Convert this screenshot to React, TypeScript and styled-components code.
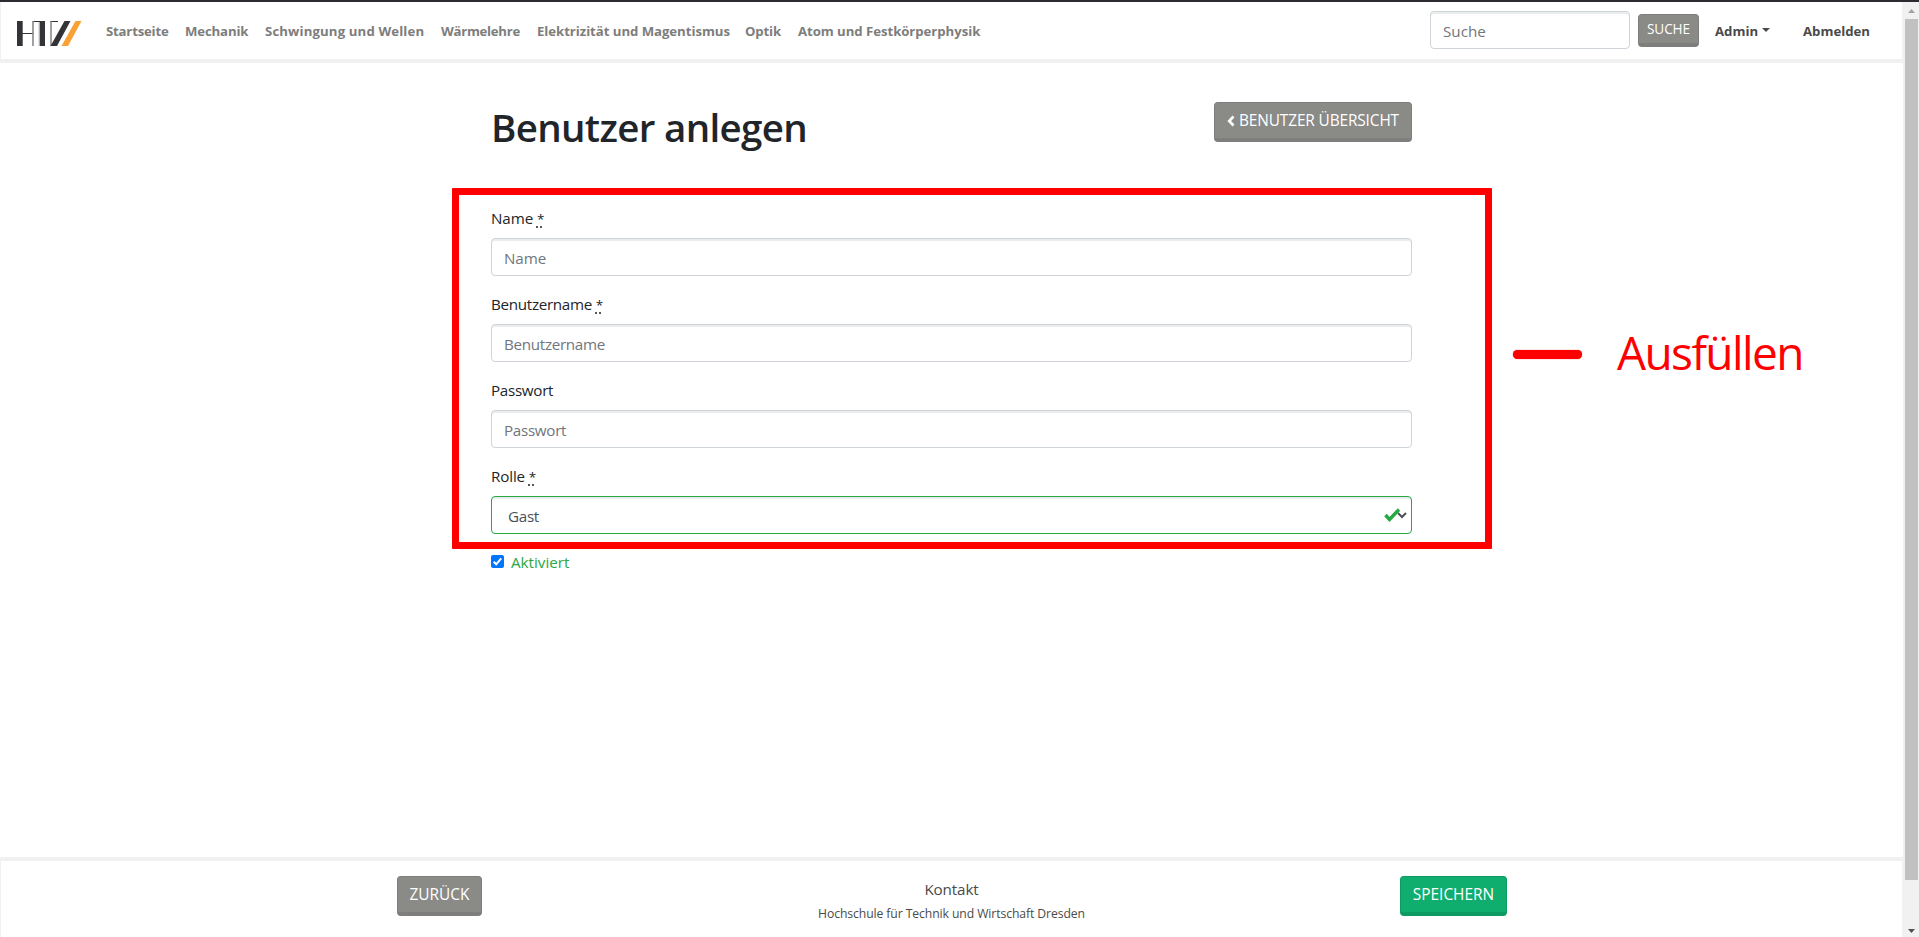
import React from 'react';
import styled, { createGlobalStyle } from 'styled-components';

const GlobalStyle = createGlobalStyle`
  * { box-sizing: border-box; }
  body {
    margin: 0;
    background: #fff;
    color: #212529;
    font: 400 15.2px/24px "Open Sans", "Noto Sans", sans-serif;
    overflow: hidden;
  }
`;

const Screen = styled.div`
  position: relative;
  display: flex;
  width: 1919px;
  height: 937px;
  border-top: 2px solid #2c2b30;
`;

const Page = styled.div`
  display: flex;
  flex-direction: column;
  width: 1903px;
`;

const Navbar = styled.header`
  display: flex;
  align-items: center;
  height: 61px;
  padding: 0 32px 1px 16px;
  border: 1px solid #f1f1f1;
  border-top: 0;
  border-bottom-width: 4px;
`;

const Logo = styled.svg`
  display: block;
  align-self: flex-start;
  width: 66px;
  height: 26px;
  margin: 19px 23px 0 0;
`;

const NavList = styled.nav`
  display: flex;
  flex: 1;
`;

const NavLink = styled.a<{ $width: number; $spacing: number; $dark?: boolean }>`
  flex: none;
  width: ${(p) => p.$width}px;
  padding-top: 2px;
  color: ${(p) => (p.$dark ? '#4a4a49' : '#7d7d7c')};
  font-size: 13.2px;
  font-weight: 700;
  letter-spacing: ${(p) => p.$spacing}px;
  white-space: nowrap;
`;

const Caret = styled.span`
  display: inline-block;
  margin-left: 4px;
  vertical-align: 4px;
  border: 4px solid transparent;
  border-top-color: #4a4a49;
  border-bottom: 0;
`;

const Input = styled.input<{ $width?: string; $spacing?: number }>`
  display: block;
  width: ${(p) => p.$width ?? '100%'};
  height: 38px;
  padding: 7px 12px 5px;
  border: 1px solid #ced4da;
  border-radius: 4px;
  background: #fff;
  box-shadow: inset 0 2px 0 #ebecec;
  font: inherit;
  letter-spacing: ${(p) => p.$spacing ?? 0}px;
  outline: none;
  &::placeholder { color: #6f767d; opacity: 1; }
`;

const Button = styled.button<{ $width: number; $small?: boolean; $primary?: boolean; $spacing?: number }>`
  display: flex;
  align-items: center;
  justify-content: center;
  flex: none;
  width: ${(p) => p.$width}px;
  height: ${(p) => (p.$small ? 33 : 40)}px;
  padding: ${(p) => (p.$small ? 0 : 1)}px 0 0;
  border: 1px solid ${(p) => (p.$primary ? '#0d9b62' : '#7e7e7c')};
  border-bottom-width: 4px;
  border-radius: 4px;
  background: ${(p) => (p.$primary ? '#0fad6e' : '#8a8a87')};
  color: #fff;
  font: 400 ${(p) => (p.$small ? 13.6 : 15.4)}px/22px "Open Sans", sans-serif;
  letter-spacing: ${(p) => p.$spacing ?? 0}px;
  white-space: nowrap;
`;

const SearchForm = styled.form`
  display: flex;
  align-items: center;
  gap: 8px;
  margin-right: 16px;
`;

const Content = styled.main`
  flex: 1;
  width: 921px;
  margin-left: 491px;
  padding-top: 39px;
`;

const TitleRow = styled.div`
  display: flex;
  justify-content: space-between;
  height: 104px;
`;

const Title = styled.h1`
  margin: 1px 0 0;
  font-size: 38.5px;
  font-weight: 600;
  line-height: 48px;
  letter-spacing: -0.66px;
`;

const Field = styled.div`
  height: 86px;
`;

const Label = styled.label<{ $spacing: number }>`
  display: block;
  height: 32px;
  letter-spacing: ${(p) => p.$spacing}px;
`;

const Required = styled.abbr`
  font-size: 13.5px;
  letter-spacing: 0;
  text-decoration: underline dotted #55595c;
  text-decoration-thickness: 2px;
  text-underline-offset: 2px;
`;

const Select = styled.div`
  display: flex;
  align-items: center;
  justify-content: space-between;
  height: 38px;
  padding: 2px 4px 0 16px;
  border: 1px solid #28a745;
  border-radius: 4px;
  box-shadow: inset 0 2px 0 #ebecec;
  color: #495057;
  letter-spacing: -0.3px;
`;

const SelectMarks = styled.svg`
  width: 24px;
  height: 16px;
  margin-top: -2px;
`;

const CheckRow = styled.label`
  display: flex;
  align-items: center;
  gap: 7px;
  color: #28a745;
`;

const Box = styled.svg`
  width: 13px;
  height: 13px;
  margin-top: -1px;
`;

const Footer = styled.footer`
  display: flex;
  justify-content: space-between;
  height: 80px;
  padding: 15px 395px 0 396px;
  border: 1px solid #f1f1f1;
  border-top-width: 4px;
  border-bottom: 0;
`;

const Contact = styled.div`
  margin: 1px 0 0 21px;
  color: #4a4a49;
  text-align: center;
  letter-spacing: -0.12px;
`;

const School = styled.div`
  margin-top: 1px;
  font-size: 12.2px;
  letter-spacing: -0.09px;
`;

const Scrollbar = styled.div`
  display: flex;
  flex-direction: column;
  align-items: center;
  width: 16px;
  padding: 7px 0 4px;
  background: #f1f1f1;
`;

const Arrow = styled.svg`
  display: block;
  width: 7px;
  height: 4px;
`;

const Thumb = styled.div`
  width: 13px;
  height: 861px;
  margin: 6px 0 auto;
  background: #c1c1c1;
`;

const Highlight = styled.div`
  position: absolute;
  left: 452px;
  top: 186px;
  width: 1040px;
  height: 361px;
  border: 7px solid #f00;
  border-radius: 1px;
`;

const Note = styled.div`
  position: absolute;
  left: 1513px;
  top: 320px;
  display: flex;
  align-items: center;
  gap: 35px;
  color: #f00;
  font-size: 46px;
  line-height: 60px;
  letter-spacing: -1.6px;
`;

const Dash = styled.span`
  width: 69px;
  height: 9px;
  margin-top: 4px;
  border-radius: 5px;
  background: #f00;
  box-shadow: 0 0 1px #f00;
`;

const links: [string, number, number][] = [
  ['Startseite', 79, -0.2],
  ['Mechanik', 80, -0.15],
  ['Schwingung und Wellen', 176, 0.13],
  ['Wärmelehre', 96, -0.27],
  ['Elektrizität und Magentismus', 208, -0.05],
  ['Optik', 53, -0.16],
  ['Atom und Festkörperphysik', 190, -0.05],
];

const fields = [
  { label: 'Name', required: true, spacing: -0.1 },
  { label: 'Benutzername', required: true, spacing: -0.3 },
  { label: 'Passwort', required: false, spacing: -0.3 },
];

export default function App() {
  return (
    <>
      <GlobalStyle />
      <Screen>
        <Page>
          <Navbar>
            <Logo viewBox="0 0 66 26">
              <path d="M0 0h5.7v25H0zM22.5 0H28v25h-5.5z" fill="#343337" />
              <path d="M5 12.5h11.5M15.5.5h8M33 .5h8" stroke="#343337" fill="none" />
              <path d="M16 0v25M34 0v25" stroke="#8b8b8b" strokeWidth="1.6" />
              <path d="M22 1v24" stroke="#c8c8c8" />
              <path d="M47.5 0h6L40 25h-6.500z" fill="#343337" />
              <path d="M58.500 0h6L51 25h-6.500z" fill="#f9a132" />
            </Logo>
            <NavList>
              {links.map(([text, width, spacing]) => (
                <NavLink key={text} $width={width} $spacing={spacing}>{text}</NavLink>
              ))}
            </NavList>
            <SearchForm>
              <Input placeholder="Suche" $width="200px" />
              <Button type="button" $width={61} $small $spacing={-0.1}>SUCHE</Button>
            </SearchForm>
            <NavLink $width={88} $spacing={0} $dark>Admin<Caret /></NavLink>
            <NavLink $width={67} $spacing={0} $dark>Abmelden</NavLink>
          </Navbar>
          <Content>
            <TitleRow>
              <Title>Benutzer anlegen</Title>
              <Button $width={198} $spacing={-0.12}>
                <svg width="8" height="12" viewBox="0 0 8 12" style={{ marginRight: 4 }}>
                  <path d="M6.500 1.500 2.200 6l4.300 4.500" fill="none" stroke="#fff" strokeWidth="2.600" />
                </svg>
                BENUTZER ÜBERSICHT
              </Button>
            </TitleRow>
            {fields.map((f) => (
              <Field key={f.label}>
                <Label $spacing={f.spacing}>{f.label} {f.required && <Required>*</Required>}</Label>
                <Input placeholder={f.label} $spacing={f.spacing} />
              </Field>
            ))}
            <Field>
              <Label $spacing={-0.15}>Rolle <Required>*</Required></Label>
              <Select>
                Gast
                <SelectMarks viewBox="0 0 24 16">
                  <path d="m15 6 4 4 4-4" fill="none" stroke="#495057" strokeWidth="2" />
                  <path d="m2.500 8 4 4.500L16 2.500" fill="none" stroke="#28a745" strokeWidth="3.400" />
                </SelectMarks>
              </Select>
            </Field>
            <CheckRow>
              <Box viewBox="0 0 13 13">
                <rect width="13" height="13" rx="2" fill="#0075ff" />
                <path d="m2.700 6.800 2.500 2.500 5-6" fill="none" stroke="#fff" strokeWidth="2" />
              </Box>
              Aktiviert
            </CheckRow>
          </Content>
          <Footer>
            <Button $width={85}>ZURÜCK</Button>
            <Contact>
              Kontakt
              <School>Hochschule für Technik und Wirtschaft Dresden</School>
            </Contact>
            <Button $width={107} $primary>SPEICHERN</Button>
          </Footer>
        </Page>
        <Scrollbar>
          <Arrow viewBox="0 0 7 4"><path d="M0 4 3.500 0 7 4z" fill="#a3a3a3" /></Arrow>
          <Thumb />
          <Arrow viewBox="0 0 7 4"><path d="M0 0h7L3.500 4z" fill="#505050" /></Arrow>
        </Scrollbar>
        <Highlight />
        <Note><Dash />Ausfüllen</Note>
      </Screen>
    </>
  );
}
